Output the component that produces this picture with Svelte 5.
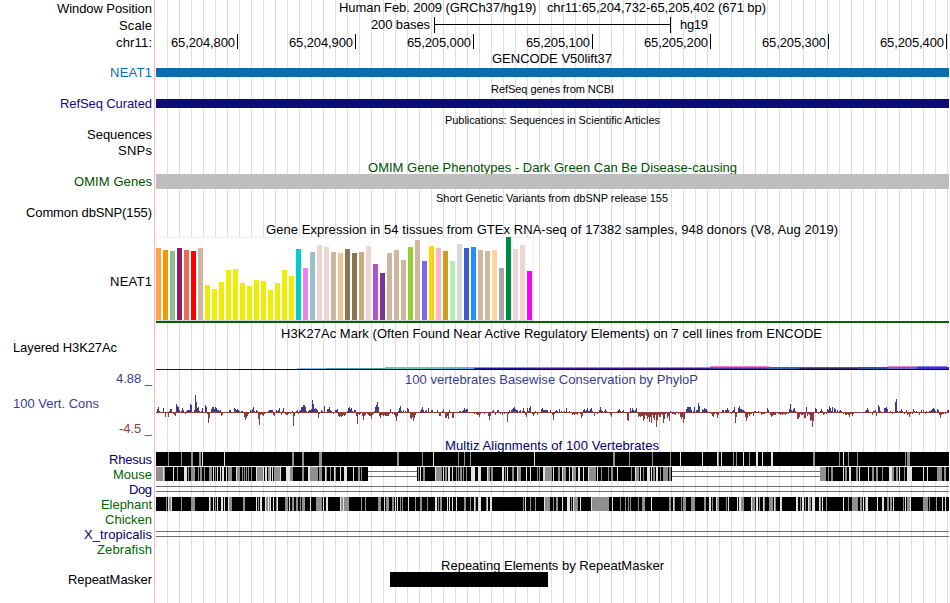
<script>
	// Plot x coordinates count from the left edge of the browser image
	const START = 156
	const END = 949

	const ticks = [
		[237, "65,204,800"],
		[355, "65,204,900"],
		[473, "65,205,000"],
		[592, "65,205,100"],
		[710, "65,205,200"],
		[828, "65,205,300"],
		[946, "65,205,400"],
	]

	// GTEx tissues: colour, bar height
	const tissues = [
		["#ffa54f", 72], ["#ee9a00", 70], ["#8fbc8f", 69], ["#8b1c62", 72], ["#ee6a50", 70], ["#ff0000", 69],
		["#cdb79e", 72], ["#eeee00", 35], ["#eeee00", 31], ["#eeee00", 38], ["#eeee00", 50], ["#eeee00", 51],
		["#eeee00", 37], ["#eeee00", 34], ["#eeee00", 40], ["#eeee00", 39], ["#eeee00", 30], ["#eeee00", 37],
		["#eeee00", 50], ["#eeee00", 44], ["#00cdcd", 71], ["#ee82ee", 52], ["#9ac0cd", 68], ["#eed5d2", 75],
		["#eed5d2", 73], ["#cdb79e", 68], ["#eec591", 67], ["#8b7355", 71], ["#8b7355", 67], ["#cdaa7d", 68],
		["#eed5d2", 74], ["#b452cd", 56], ["#7a378b", 47], ["#cdb79e", 67], ["#cdb79e", 70], ["#cdb79e", 60],
		["#9acd32", 73], ["#cdb79e", 80], ["#7a67ee", 59], ["#ffd700", 74], ["#ffb6c1", 72], ["#cd9b1d", 69],
		["#b4eeb4", 59], ["#d9d9d9", 76], ["#3a5fcd", 72], ["#1e90ff", 73], ["#cdb79e", 70], ["#cdb79e", 69],
		["#ffd39b", 70], ["#a6a6a6", 52], ["#008b45", 83], ["#eed5d2", 71], ["#eed5d2", 75], ["#ff00ff", 49],
	]

	// Layered H3K27Ac: x, y, width, height, colour
	const histone = [
		[156, 28, 81, 1, "#3a0a20"],
		[237, 28, 712, 1, "#10002c"],
		[297, 27, 29, 1, "#7ab8ee"],
		[326, 27, 59, 1, "#38aaa8"],
		[385, 26, 59, 2, "#50d0b8"],
		[444, 26, 30, 2, "#58b4e8"],
		[474, 26, 59, 1, "#58a8e8"],
		[474, 27, 59, 1, "#1818a0"],
		[533, 26, 177, 1, "#ec60c4"],
		[533, 27, 177, 1, "#40189c"],
		[710, 25, 59, 1, "#f080cc"],
		[710, 26, 59, 1, "#6a68a8"],
		[710, 27, 59, 1, "#3840a0"],
		[769, 26, 30, 2, "#3860ac"],
		[799, 26, 59, 1, "#605888"],
		[799, 27, 59, 1, "#302860"],
		[858, 26, 30, 2, "#2858a4"],
		[888, 25, 29, 1, "#e884d8"],
		[888, 26, 29, 2, "#7060cc"],
		[917, 25, 30, 1, "#8478f0"],
		[917, 26, 32, 2, "#3830dc"],
	]

	// PhyloP score for each pixel column
	const phylop = [
		0, 3, 5, 1, 0, 0, 0, 4, 0, -5, 0, 0, -5, 1, 3, 3, 0, -2, -3, -4,
		8, 6, 5, 2, 0, 1, 4, 2, 0, -2, 1, 2, 2, 2, 8, 7, 0, -1, 2, 17,
		10, 4, 5, 1, 0, 1, 4, 0, -1, 7, 5, -2, -11, -6, 0, 3, 5, 5, 3, 5,
		4, 2, 2, 1, 2, -4, -3, -1, -1, -1, 0, 0, 0, 2, 2, 0, 0, 0, 4, 3,
		2, 3, 2, 1, 0, 1, 1, -1, -5, -8, -6, -4, -2, 0, 2, 1, 3, 5, 1, 0,
		2, 1, -7, -13, -3, -2, -3, -4, -2, -1, -1, 0, 1, 2, 2, 2, 2, -3, -4, 0,
		2, 1, 2, 4, 0, -3, 1, 4, 0, -2, -3, -3, -2, -1, -2, 0, 1, -14, -4, 0,
		1, 2, -2, 1, 2, 5, 5, 7, 7, 5, 1, 0, 1, 2, 2, 3, 12, 8, 3, 4,
		3, 2, -6, -2, 0, 2, 1, 0, 6, 0, -1, 3, 3, 5, 2, 1, -1, -2, 0, 2,
		2, 3, -4, -5, -4, -5, -4, -3, -4, -3, -1, 1, 4, 5, 3, 4, 1, -1, 2, 2,
		-4, -12, -2, -3, -2, -1, -4, -8, -4, -3, -1, -2, -3, -4, -4, -7, -3, -2, 1, 5,
		7, 10, 5, -4, -6, -3, -3, -4, -3, -4, -4, -4, -4, -2, 3, 0, -2, 0, -3, -5,
		-9, -4, 1, 4, 6, 1, 0, 2, 0, 1, -1, 4, 3, -1, -6, -7, -5, -9, -6, -3,
		-1, -1, 0, -1, 1, 3, 5, 2, 0, 1, 2, 0, 4, 0, 0, 2, 2, 0, 0, -1,
		0, 2, 0, -4, -4, 0, 1, 3, 0, -6, -6, -4, -7, 2, -1, 0, -6, -6, 0, 0,
		-1, 0, 0, 1, 1, 0, 1, 2, 4, 2, 3, 3, 0, 0, -1, -1, -1, -1, -2, -1,
		-2, -3, -3, -5, -2, 0, 0, -1, -2, -1, 0, -1, -4, -8, -4, 0, 1, 2, 0, -3,
		0, 2, 2, 0, -2, -1, -3, -1, -2, -1, 0, -10, -2, 2, 0, 2, 3, 4, 5, 3,
		2, 2, 0, 1, 2, 0, 1, 4, 1, -3, -5, 4, 1, 4, 6, 0, -2, -4, -2, 1,
		0, -3, 0, 0, 0, 3, 4, 2, 2, 2, 2, 2, 0, -1, 2, 0, -3, -8, -2, 1,
		2, 1, 0, 3, 0, 1, 0, 0, 1, 0, 4, 0, 0, 1, 0, 0, -3, -2, -3, -2,
		-2, -3, -1, -1, -2, -6, -4, 2, 3, 1, 2, 4, 1, 1, 3, 4, 1, 0, -4, -1,
		0, -2, 0, 2, 5, 2, 1, -1, 1, 3, 1, 0, -1, 0, -3, -5, 0, 0, -1, 0,
		0, 1, 2, 3, 1, 0, 1, 2, -1, 0, 0, -8, -9, 0, 4, 1, 4, 2, 1, 2,
		4, 0, -5, -4, -5, -4, -4, -9, -7, -3, -4, -7, -5, -10, -5, -11, -3, -6, -8, -3,
		-15, -8, -3, -5, -5, -2, -3, -11, -7, -2, -1, -6, -4, -9, 1, 0, -2, -2, -2, -3,
		-1, -1, -2, -1, -5, -7, -5, -11, -7, 0, 3, 5, 5, 5, 5, 2, 0, 1, 5, 0,
		2, 2, 9, 6, 0, 0, 3, 2, 4, 3, 3, 1, 0, -1, -1, -2, -4, -5, -2, 0,
		-2, -6, -3, -1, -1, 0, 2, 2, 0, 2, 2, 4, 2, 0, 0, -2, 1, 2, 5, -11,
		-5, 0, 4, 6, 3, 3, 2, 2, 1, -5, -9, -6, -2, -4, -2, -2, 0, -4, 1, 1,
		0, 0, 1, 0, -1, -3, -2, -2, -2, -1, -1, 4, 2, 0, -3, -5, -4, -3, -3, -3,
		-1, 0, -2, -2, -3, -2, -3, -2, -2, -3, -2, -1, -2, 3, 8, 2, 1, 3, 4, 1,
		0, -7, -7, -5, -2, -3, -3, -2, -6, -6, 5, -4, -2, -3, -9, -8, -15, -9, 0, 4,
		3, 0, -2, -1, 1, 3, 1, -3, -2, 0, -2, 3, 2, 6, 4, 1, 5, 0, 4, 3,
		0, 2, 0, 1, 2, 1, -1, -2, -1, -3, -3, -2, -3, -5, -2, -2, -4, -2, -1, -1,
		-1, -1, -1, -1, -1, -1, -1, -1, -1, 1, 2, 4, 2, 0, 0, -1, -3, 1, 1, 2,
		-4, -1, 7, 5, 1, 0, -1, 0, 4, 4, 5, 3, 0, 0, 1, 0, -2, 0, 0, 10,
		13, 1, 0, 1, 1, 3, 1, 0, -2, -1, 2, -3, -2, -5, -2, 0, -2, 3, 1, 0,
		1, 0, -1, -3, -1, 2, 0, 2, 0, -2, 1, 0, -1, 1, 1, 2, 3, 4, 3, 1,
		0, 3, 2, -3, -6, -3, -2, -2, -1, -2, 0, 2, 2,
	]

	// Multiz alignments: black blocks, with grey and light columns as [x, width]
	const species = [
		{
			name: "Rhesus", x: 109, color: "#000066",
			blocks: [[156, 793]],
			grey: [[168, 1], [181, 1], [191, 2], [199, 2], [292, 2], [302, 2], [319, 3], [397, 2], [422, 1], [458, 1], [464, 1], [470, 1], [613, 2], [629, 1], [652, 1], [670, 1], [718, 1], [733, 1], [736, 1], [749, 1], [813, 2], [839, 1], [848, 1], [857, 1], [905, 1], [907, 3]],
			light: [[202, 1], [224, 1], [433, 1], [534, 1], [680, 1], [702, 1], [717, 1], [721, 1], [743, 1], [756, 2], [762, 1], [771, 2], [843, 1]],
		},
		{
			name: "Mouse", x: 113, color: "#006400",
			blocks: [[156, 212], [417, 255], [820, 129]],
			gaps: [[368, 49], [672, 148]],
			grey: [[156, 7], [164, 1], [177, 1], [188, 1], [191, 4], [198, 1], [200, 2], [204, 1], [209, 3], [215, 1], [228, 4], [237, 3], [242, 1], [244, 1], [246, 1], [248, 1], [251, 1], [257, 6], [268, 2], [274, 6], [290, 3], [302, 2], [310, 8], [319, 3], [326, 1], [330, 1], [335, 1], [358, 2], [361, 1], [418, 1], [423, 2], [436, 6], [445, 2], [456, 1], [458, 1], [460, 2], [463, 1], [466, 1], [488, 2], [491, 2], [505, 1], [512, 2], [518, 3], [537, 1], [539, 1], [545, 7], [558, 2], [563, 3], [573, 3], [589, 7], [601, 1], [608, 1], [611, 2], [631, 1], [636, 3], [643, 1], [653, 2], [660, 1], [663, 5], [669, 2], [820, 6], [828, 1], [831, 2], [845, 2], [856, 2], [872, 2], [876, 2], [882, 1], [892, 2], [896, 2], [904, 1], [937, 5], [944, 2]],
			light: [[163, 1], [173, 1], [184, 3], [213, 1], [217, 1], [220, 1], [222, 2], [226, 1], [236, 1], [256, 1], [263, 1], [265, 2], [270, 1], [272, 1], [280, 1], [286, 4], [308, 2], [325, 1], [334, 1], [340, 1], [344, 3], [353, 1], [420, 1], [435, 1], [443, 1], [448, 2], [452, 1], [471, 4], [478, 3], [487, 1], [502, 2], [507, 1], [517, 1], [526, 1], [530, 1], [543, 2], [553, 1], [562, 1], [569, 1], [572, 1], [578, 2], [583, 1], [588, 1], [597, 1], [617, 1], [635, 1], [640, 1], [647, 3], [651, 1], [656, 2], [843, 1], [849, 2], [859, 1], [868, 1], [889, 3], [899, 1], [907, 5], [923, 1], [927, 1]],
		},
		{ name: "Dog", x: 129, color: "#000066", gaps: [[156, 793]] },
		{
			name: "Elephant", x: 101, color: "#006400",
			blocks: [[156, 793]],
			grey: [[166, 1], [169, 2], [181, 1], [191, 4], [210, 1], [215, 1], [229, 3], [243, 2], [258, 1], [266, 4], [276, 1], [285, 3], [292, 2], [296, 2], [300, 1], [302, 3], [316, 6], [341, 2], [344, 5], [361, 1], [365, 1], [378, 3], [386, 3], [392, 2], [400, 1], [402, 1], [415, 1], [420, 2], [427, 1], [438, 1], [440, 2], [464, 2], [470, 1], [475, 1], [486, 1], [523, 1], [530, 1], [535, 1], [545, 5], [553, 1], [556, 2], [571, 1], [574, 4], [592, 17], [620, 1], [625, 1], [628, 1], [630, 1], [638, 1], [642, 3], [669, 2], [674, 1], [681, 1], [683, 3], [691, 4], [704, 2], [712, 1], [717, 2], [726, 1], [741, 3], [752, 3], [759, 1], [764, 1], [769, 4], [775, 1], [800, 1], [805, 1], [809, 2], [820, 1], [826, 1], [848, 1], [852, 6], [860, 2], [865, 1], [887, 2], [890, 2], [903, 1], [907, 3], [923, 5], [929, 1], [936, 1]],
			light: [[168, 1], [171, 1], [209, 1], [213, 1], [217, 1], [221, 2], [224, 1], [228, 1], [256, 1], [260, 2], [265, 1], [268, 1], [270, 1], [273, 1], [277, 1], [289, 1], [310, 1], [323, 1], [326, 2], [340, 1], [343, 1], [384, 1], [395, 1], [397, 1], [408, 1], [435, 2], [447, 1], [449, 1], [452, 1], [456, 1], [474, 1], [478, 3], [487, 1], [490, 2], [525, 1], [544, 1], [562, 1], [567, 3], [573, 1], [580, 1], [591, 1], [612, 1], [651, 1], [673, 1], [709, 2], [716, 1], [728, 1], [737, 1], [739, 2], [751, 1], [756, 2], [763, 1], [774, 1], [780, 2], [796, 2], [802, 2], [808, 1], [812, 3], [819, 1], [822, 1], [843, 1], [863, 1], [866, 2], [877, 1], [882, 2], [893, 1], [905, 1], [910, 1], [942, 1], [945, 1]],
		},
		{ name: "Chicken", x: 105, color: "#006400" },
		{ name: "X_tropicalis", x: 84, color: "#000066", gaps: [[156, 793]] },
		{ name: "Zebrafish", x: 97, color: "#006400" },
	]
</script>

{#snippet line(str, x, end, y, color = "#000", size = 13)}
	<text {x} {y} fill={color} font-size={size} textLength={end - x}>{str}</text>
{/snippet}

{#snippet label(str, x, y, height, color = "#000", end = 152)}
	<svg width="156" {height}>
		{@render line(str, x, end, y, color)}
	</svg>
{/snippet}

{#snippet title(str, x, end, y, height, color = "#000", size = 13)}
	<svg class="title" width="794" {height} viewBox="156 0 794 {height}">
		{@render line(str, x, end, y, color, size)}
	</svg>
{/snippet}

{#snippet bar(x, width, y, thick, height, color)}
	<svg width="794" {height} viewBox="156 0 794 {height}">
		<rect {x} {y} {width} height={thick} fill={color} />
	</svg>
{/snippet}

<main class="browser">
	<div class="row">
		{@render label("Window Position", 57, 13, 17)}
		{@render title("Human Feb. 2009 (GRCh37/hg19)\u00a0\u00a0 chr11:65,204,732-65,205,402 (671 bp)", 339, 766, 12, 17)}
	</div>

	<div class="row">
		{@render label("Scale", 119, 13, 17)}
		<svg width="794" height="17" viewBox="156 0 794 17">
			{@render line("200 bases", 371, 430, 12)}
			<path d="M434 0h1v16h-1z M434 7h237v1H434z M670 0h1v16h-1z" />
			{@render line("hg19", 680, 708, 12)}
		</svg>
	</div>

	<div class="row">
		{@render label("chr11:", 116, 13, 16)}
		<svg width="794" height="16" viewBox="156 0 794 16">
			{#each ticks as [x, position]}
				{@render line(position, x - 66, x - 2, 13)}
				<rect {x} y="0" width="1" height="15" />
			{/each}
		</svg>
	</div>

	<section>
		{@render title("GENCODE V50lift37", 492, 612, 13, 16)}
		<div class="row">
			{@render label("NEAT1", 110, 11, 15, "#0c6aaa")}
			{@render bar(START, END - START, 2, 9, 15, "#0c6cac")}
		</div>
	</section>

	<section>
		{@render title("RefSeq genes from NCBI", 491, 614, 12, 16, "#000", 11)}
		<div class="row">
			{@render label("RefSeq Curated", 60, 11, 15, "#0c0c78")}
			{@render bar(START, END - START, 2, 9, 15, "#0c0c78")}
		</div>
	</section>

	<section>
		{@render title("Publications: Sequences in Scientific Articles", 445, 660, 12, 15, "#000", 11)}
		<div class="row">{@render label("Sequences", 87, 12, 16)}</div>
		<div class="row">{@render label("SNPs", 118, 12, 16)}</div>
	</section>

	<section>
		{@render title("OMIM Gene Phenotypes - Dark Green Can Be Disease-causing", 368, 737, 13, 15, "#005000")}
		<div class="row">
			{@render label("OMIM Genes", 74, 12, 16, "#005000")}
			{@render bar(START, END - START, 0, 15, 16, "#bebebe")}
		</div>
	</section>

	<section>
		{@render title("Short Genetic Variants from dbSNP release 155", 436, 668, 12, 16, "#000", 11)}
		<div class="row">{@render label("Common dbSNP(155)", 26, 11, 15)}</div>
	</section>

	<section>
		{@render title("Gene Expression in 54 tissues from GTEx RNA-seq of 17382 samples, 948 donors (V8, Aug 2019)", 266, 838, 13, 16)}
		<div class="row">
			{@render label("NEAT1", 110, 49, 88)}
			<svg width="794" height="88" viewBox="156 0 794 88">
				<rect x="156" y="0" width="378" height="84" fill="#f0f0f0" />
				<rect x="157" y="1" width="376" height="82" fill="#fff" />
				{#each tissues as [color, height], i}
					<rect x={START + i * 7} y={83 - height} width="5" {height} fill={color} />
				{/each}
				<rect x="156" y="83" width="378" height="1" fill="#d3d3d3" />
				<rect x="156" y="84" width="793" height="2" fill="#006400" />
			</svg>
		</div>
	</section>

	<section>
		{@render title("H3K27Ac Mark (Often Found Near Active Regulatory Elements) on 7 cell lines from ENCODE", 281, 822, 13, 16)}
		<div class="row">
			{@render label("Layered H3K27Ac", 13, 11, 30, "#000", 117)}
			<svg width="794" height="30" viewBox="156 0 794 30">
				{#each histone as [x, y, width, height, color]}
					<rect {x} {y} {width} {height} fill={color} />
				{/each}
			</svg>
		</div>
	</section>

	<section>
		<div class="row">
			{@render label("4.88 _", 116, 12, 17, "#3c3c8c")}
			{@render title("100 vertebrates Basewise Conservation by PhyloP", 405, 698, 13, 17, "#3c3c8c")}
		</div>
		<div class="row">
			<svg width="156" height="50">
				{@render line("100 Vert. Cons", 13, 99, 20, "#3c3c8c")}
				{@render line("-4.5 _", 119, 152, 45, "#8c3c3c")}
			</svg>
			<svg width="794" height="50" viewBox="156 0 794 50">
				<rect x="156" y="24" width="793" height="1" fill="#8c3c3c" />
				{#each phylop as score, i}
					{#if score > 0}
						<rect x={START + i} y={24 - score} width="1" height={score} fill="#3c3c8c" />
					{:else if score < 0}
						<rect x={START + i} y="24" width="1" height={-score} fill="#8c3c3c" />
					{/if}
				{/each}
			</svg>
		</div>
	</section>

	<section>
		{@render title("Multiz Alignments of 100 Vertebrates", 445, 659, 12, 14, "#000066")}
		{#each species as s}
			<div class="row">
				{@render label(s.name, s.x, 12, 15, s.color)}
				<svg width="794" height="15" viewBox="156 0 794 15">
					{#each s.gaps ?? [] as [x, width]}
						<rect {x} y="4" {width} height="1" fill="#6e6e6e" />
						<rect {x} y="9" {width} height="1" fill="#6e6e6e" />
					{/each}
					{#each s.blocks ?? [] as [x, width]}
						<rect {x} y="0" {width} height="14" />
					{/each}
					{#each s.grey ?? [] as [x, width]}
						<rect {x} y="0" {width} height="14" fill="#8f8f8f" />
					{/each}
					{#each s.light ?? [] as [x, width]}
						<rect {x} y="0" {width} height="14" fill="#e2e2e2" />
					{/each}
				</svg>
			</div>
		{/each}
	</section>

	<section>
		{@render title("Repeating Elements by RepeatMasker", 441, 664, 13, 15)}
		<div class="row">
			{@render label("RepeatMasker", 68, 12, 31)}
			{@render bar(390, 158, 0, 15, 31, "#000")}
		</div>
	</section>
</main>

<style>
	:global(body) {
		margin: 0;
		background: #fff;
	}

	.browser {
		display: flex;
		flex-direction: column;
		width: 950px;
		height: 603px;
		overflow: hidden;
		font-family: "Liberation Sans", Arial, sans-serif;
		/* red divider after the labels, then a guide line every 12px */
		background:
			linear-gradient(#ffb4b4, #ffb4b4) 154px 0 / 1px 100% no-repeat,
			repeating-linear-gradient(to right, transparent 0 11px, #dcdcf8 11px 12px) 156px 0 / 794px 100% no-repeat;
	}

	section {
		display: flex;
		flex-direction: column;
	}

	.row {
		display: flex;
	}

	svg {
		display: block;
		flex: none;
		overflow: visible;
		shape-rendering: crispEdges;
	}

	/* a title on its own line starts where the plot column does */
	section > .title {
		margin-left: 156px;
	}

	text {
		white-space: pre;
	}
</style>
